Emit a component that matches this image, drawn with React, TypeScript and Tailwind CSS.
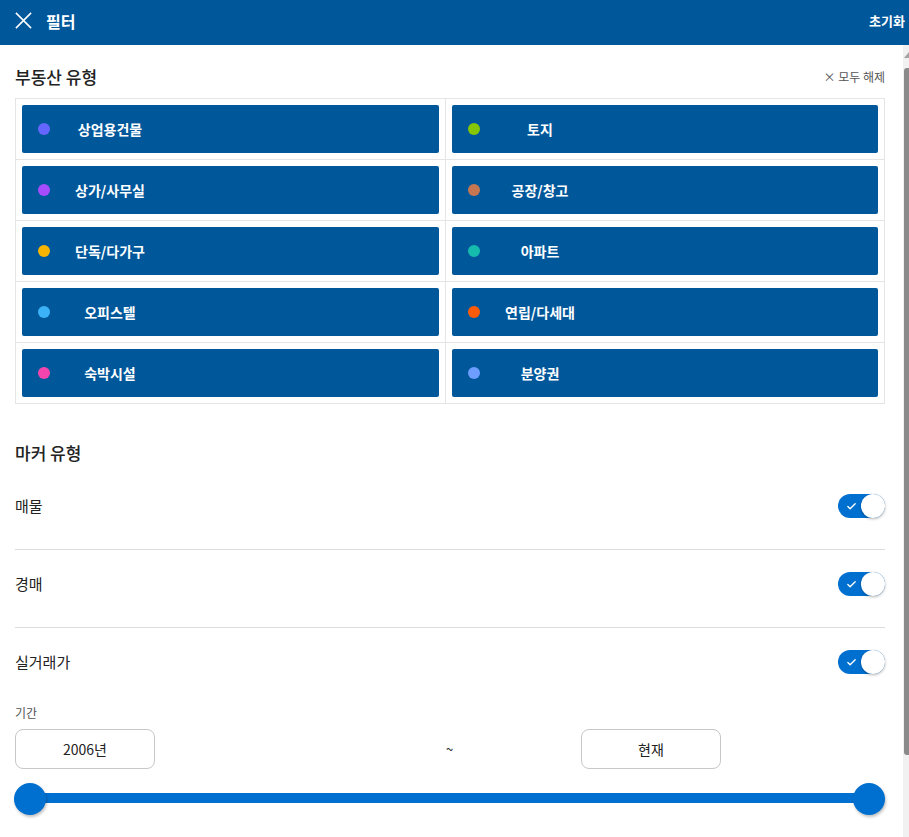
import { Check } from "lucide-react";

const types = [
  { name: "상업용건물", color: "bg-[#6466ff]" },
  { name: "토지", color: "bg-[#86c604]" },
  { name: "상가/사무실", color: "bg-[#a54cfd]" },
  { name: "공장/창고", color: "bg-[#c67752]" },
  { name: "단독/다가구", color: "bg-[#f5b400]" },
  { name: "아파트", color: "bg-[#15bcae]" },
  { name: "오피스텔", color: "bg-[#3cb3f8]" },
  { name: "연립/다세대", color: "bg-[#ff5b0b]" },
  { name: "숙박시설", color: "bg-[#f345ad]" },
  { name: "분양권", color: "bg-[#6c9dff]" },
];

const markers = ["매물", "경매", "실거래가"];

function Toggle() {
  return (
    <div className="relative flex h-[24px] w-[47px] items-center rounded-full bg-[#0070d0] pl-[8px]">
      <Check size={11} strokeWidth={3} className="text-white" />
      <span className="absolute top-0 right-0 h-[24px] w-[24px] rounded-full bg-white shadow-[0_1px_3px_rgba(0,0,0,0.3)]" />
    </div>
  );
}

export default function App() {
  return (
    <div
      className="flex h-[837px] w-[909px] flex-col overflow-hidden bg-white text-[#222]"
      style={{ fontFamily: '"Noto Sans CJK KR", "Noto Sans", sans-serif' }}
    >
      <header className="flex h-[45px] shrink-0 items-center bg-[#00589b] pb-[4px] pr-[4px] pl-[14px] text-white">
        <svg width="19" height="19" viewBox="0 0 20 20" className="mr-[13px]">
          <path d="M2 2 L18 18 M18 2 L2 18" stroke="white" strokeWidth="1.6" fill="none" />
        </svg>
        <span className="text-[16px] font-bold">필터</span>
        <span className="ml-auto text-[13px] font-bold">초기화</span>
      </header>

      <div className="flex flex-1 overflow-hidden">
        <main className="flex-1 pt-[20px] pr-[18px] pl-[15px]">
          <div className="flex h-[24px] items-center justify-between">
            <h2 className="text-[17px] font-medium">부동산 유형</h2>
            <span className="text-[12px] text-[#555]">× 모두 해제</span>
          </div>

          <div className="mt-[9px] grid grid-cols-[430px_1fr] border-t border-l border-[#e5e5e5]">
            {types.map((t) => (
              <div key={t.name} className="border-r border-b border-[#e5e5e5] p-[6px]">
                <div className="flex h-[48px] items-center rounded-[2px] bg-[#00589b] pl-[16px]">
                  <span className={`h-[12px] w-[12px] rounded-full ${t.color}`} />
                  <span className="ml-[10px] w-[100px] text-center text-[14px] font-bold text-white">
                    {t.name}
                  </span>
                </div>
              </div>
            ))}
          </div>

          <h2 className="mt-[37px] flex h-[24px] items-center text-[17px] font-medium">마커 유형</h2>

          <div className="mt-[7px]">
            {markers.map((m, i) => (
              <div
                key={m}
                className={`flex h-[24px] box-content items-center justify-between pt-[22px] ${
                  i < markers.length - 1 ? "border-b border-[#dcdcdc] pb-[31px]" : ""
                }`}
              >
                <span className="text-[15px]">{m}</span>
                <Toggle />
              </div>
            ))}
          </div>

          <div className="mt-[31px] h-[16px] text-[12px] leading-[16px] text-[#555]">기간</div>

          <div className="mt-[8px] flex items-center">
            <div className="flex h-[40px] w-[140px] items-center justify-center rounded-[8px] border border-[#c8c8c8] text-[14px]">
              2006년
            </div>
            <div className="w-[426px] pl-[291px] text-[13px]">~</div>
            <div className="flex h-[40px] w-[140px] items-center justify-center rounded-[8px] border border-[#c8c8c8] text-[14px]">
              현재
            </div>
          </div>

          <div className="relative mt-[14px] -ml-px h-[32px]">
            <div className="absolute top-[10px] right-[16px] left-[16px] h-[10px] bg-[#0070d0]" />
            <span className="absolute top-0 left-0 h-[32px] w-[32px] rounded-full bg-[#0070d0] shadow-[1px_2px_3px_rgba(0,0,0,0.25)]" />
            <span className="absolute top-0 right-0 h-[32px] w-[32px] rounded-full bg-[#0070d0] shadow-[1px_2px_3px_rgba(0,0,0,0.25)]" />
          </div>
        </main>

        <div className="flex w-[6px] shrink-0 flex-col bg-[#f1f1f1] pt-[7px]">
          <svg width="6" height="6" viewBox="0 0 6 6" className="ml-[1px]">
            <path d="M0 6 L5 0 L5 6 Z" fill="#a3a3a3" />
          </svg>
          <div className="mt-[10px] ml-[1px] h-[687px] rounded-tl-[3px] rounded-bl-[3px] bg-[#8a8a8a]" />
        </div>
      </div>
    </div>
  );
}
